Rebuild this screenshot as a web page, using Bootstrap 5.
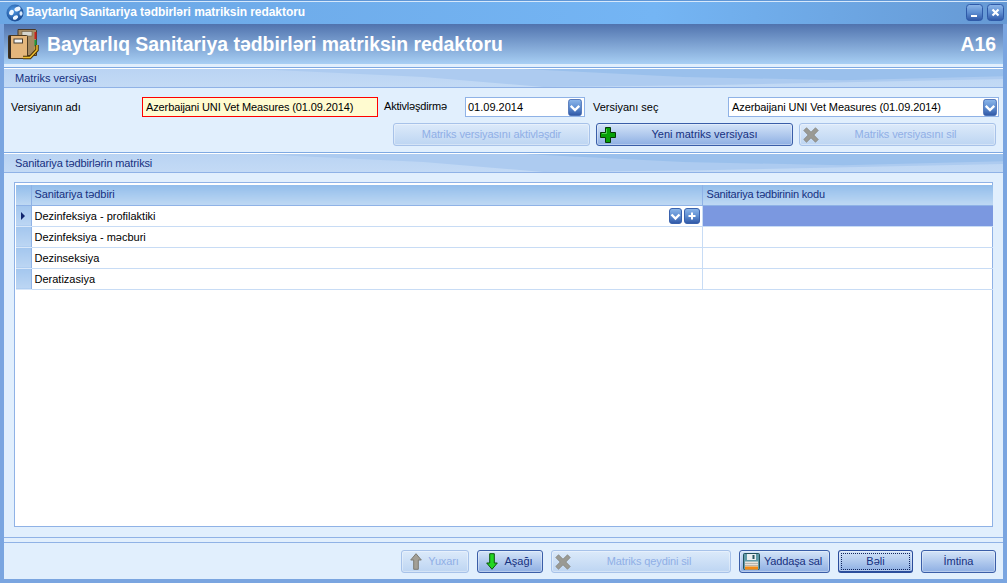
<!DOCTYPE html>
<html lang="az">
<head>
  <meta charset="UTF-8" />
  <meta name="viewport" content="width=device-width, initial-scale=1.0"/>
  <title>Baytarlıq Sanitariya tədbirləri matriksin redaktoru</title>
  <link href="https://cdn.jsdelivr.net/npm/bootstrap@5.3.0/dist/css/bootstrap.min.css" rel="stylesheet">
  <style>
    html, body {
      height: 100%;
      margin: 0;
      overflow: hidden;
    }

    body {
      background-color: #e1effd;
      font-family: "Liberation Sans", Arial, sans-serif;
      font-size: 11px;
      color: #000;
      line-height: 13px;
    }

    .app-window {
      width: 1007px;
      height: 583px;
    }

    .title-strip {
      height: 24px;
      flex: none;
      padding: 0 3px 0 6px;
      border-top: 1px solid #5f96d6;
      box-shadow: inset 0 1px 0 #d6e8fb;
      background: linear-gradient(90deg, #6ba6e4, #74b5f4 65%, #6699d4);
      color: #fff;
      font-size: 12px;
      font-weight: 700;
      letter-spacing: -.06px;
    }

    .title-text {
      flex: 1;
      margin-left: 2px;
    }

    .win-btn {
      width: 17px;
      height: 17px;
      display: block;
    }

    .win-body {
      flex: 1;
      min-height: 0;
      border-left: 4px solid #7aa5e0;
      border-right: 4px solid #7aa5e0;
      border-bottom: 4px solid #7aa5e0;
    }

    .head-strip {
      height: 40px;
      flex: none;
      padding: 0 7px 0 4px;
      background: linear-gradient(180deg, #5073ae, #a8cff4);
      color: #fff;
      font-size: 19.4px;
      font-weight: 700;
    }

    .head-gap {
      height: 3px;
      flex: none;
      background: #e1effd;
    }

    .sect-bar {
      position: relative;
      height: 21px;
      flex: none;
      border-top: 1px solid #7ea9e2;
      border-bottom: 1px solid #8fb2e6;
      padding: 4px 0 0 11px;
      color: #16307f;
      background: linear-gradient(180deg, #b9d3f3, #c3daf5);
    }

    .sect-bar::before,
    .sect-bar::after {
      content: "";
      position: absolute;
      left: 0;
      right: 0;
      top: 1px;
      bottom: 0;
    }

    .sect-bar::before {
      background: #adcbf0;
      clip-path: polygon(25% 0, 42% 45%, 54% 100%, 70% 90%, 100% 55%, 100% 0);
    }

    .sect-bar::after {
      background: #9ac0ec;
      clip-path: polygon(52% 0, 68% 45%, 84% 62%, 100% 40%, 100% 0);
    }

    .sect-white {
      position: absolute;
      left: 0;
      right: 0;
      top: 0;
      height: 1px;
      background: #fff;
      z-index: 1;
    }

    .sect-label {
      position: relative;
      z-index: 1;
    }

    .sect-label-tight {
      letter-spacing: -.13px;
    }

    .form-area {
      height: 64px;
      flex: none;
      padding: 9px 4px 0 7px;
    }

    .field-row {
      height: 20px;
      margin-bottom: 6px;
    }

    .lbl-name { width: 131px; }
    .lbl-act { width: 81px; margin-left: 6px; margin-top: -2px; letter-spacing: -.2px; }
    .lbl-pick { width: 135px; margin-left: 8px; }

    .form-control.name-input {
      width: 236px;
      height: 20px;
      min-height: 0;
      padding: 0 3px;
      border: 1px solid #f00;
      border-radius: 0;
      background: #fffbd0;
      font-size: 11px;
      line-height: 18px;
      color: #000;
      letter-spacing: -.12px;
    }

    .combo-box {
      height: 20px;
      padding: 0 1px 0 2px;
      border: 1px solid #8fb2e6;
      background: #fff;
    }

    .combo-date { width: 120px; padding-right: 2px; }
    .combo-version { width: 271px; padding-left: 3px; letter-spacing: -.08px; }

    .top-actions {
      gap: 6px;
      padding-right: 3px;
    }

    .btn.win-action {
      height: 23px;
      padding: 0 3px;
      border: 1px solid #3a5ea8;
      border-radius: 3px;
      background: linear-gradient(180deg, #d4e4f8, #8eafe3);
      color: #16307f;
      font-size: 11px;
      line-height: 13px;
      display: flex;
      align-items: center;
      box-shadow: inset 0 0 0 1px rgba(255,255,255,.35);
    }

    .btn.win-action:disabled {
      opacity: 1;
      border-color: #a7c2e9;
      background: linear-gradient(180deg, #dceafa, #bdd5f2);
      color: #90afe6;
      letter-spacing: -.12px;
    }

    .btn.win-action.is-default {
      border-color: #2a4d9c;
      border-width: 1px 1px 2px 1px;
      outline: 1px dotted #10245c;
      outline-offset: -4px;
    }

    .act-top { width: 197px; }
    .act-top-new .act-text { padding-left: 4px; }
    .act-up { width: 68px; }
    .act-down { width: 66px; }
    .act-del { width: 180px; }
    .act-save { width: 91px; letter-spacing: -.15px; padding-right: 3px !important; }
    .act-ok, .act-cancel { width: 75px; justify-content: center; }

    .act-text {
      flex: 1;
      text-align: center;
    }

    .grid-wrap {
      flex: 1;
      min-height: 0;
      padding: 9px 10px 10px 10px;
    }

    .grid-frame {
      height: 100%;
      padding: 2px 0 0 1px;
      border: 1px solid #8fb2e6;
      background: #fff;
    }

    .table.grid-table {
      table-layout: fixed;
      width: 977px;
      --bs-table-bg: transparent;
      font-size: 11px;
      color: #000;
    }

    .col-mark { width: 15px; }
    .col-name { width: 671px; }

    .grid-table th,
    .grid-table td {
      height: 21px;
      padding: 1px 3px 0;
      vertical-align: middle;
      border: 0;
      border-bottom: 1px solid #c8dcf5;
      border-right: 1px solid #c8dcf5;
      font-weight: 400;
    }

    .grid-table td:last-child,
    .grid-table th:last-child {
      border-right: 0;
    }

    .grid-table th {
      height: 20px;
      padding-top: 0;
      color: #16307f;
      border-bottom-color: #8fb2e6;
      border-right-color: #8fb2e6;
      background: linear-gradient(180deg, #92bdeb, #bed8f3);
      letter-spacing: -.1px;
    }

    .grid-table th:last-child {
      padding-left: 4px;
      letter-spacing: -.2px;
    }

    .grid-table .row-mark {
      padding: 0;
      border-right: 1px solid #8fb2e6;
      border-bottom: 1px solid #d8e7f9;
      background: linear-gradient(180deg, #a3c6ee, #bcd6f3);
    }

    .grid-table .cell-selected {
      background: #7b98e0;
    }

    .cell-btn {
      display: block;
      flex: none;
    }

    .cell-tools {
      display: flex;
      gap: 2px;
      margin-right: -1px;
    }

    .foot-area {
      height: 42px;
      flex: none;
      border-top: 1px solid #8fb2e6;
      padding-top: 4px;
    }

    .foot-row {
      border-top: 1px solid #8fb2e6;
      padding: 7px 7px 0 0;
    }
  </style>
</head>
<body>

<svg width="0" height="0" class="position-absolute">
  <defs>
    <linearGradient id="blueBtn" x1="0" y1="0" x2="0" y2="1">
      <stop offset="0" stop-color="#8db7ea"/>
      <stop offset=".5" stop-color="#5f8fd2"/>
      <stop offset="1" stop-color="#2f57a6"/>
    </linearGradient>
    <radialGradient id="globeFill" cx=".4" cy=".35" r=".75">
      <stop offset="0" stop-color="#4f9ae6"/>
      <stop offset="1" stop-color="#123f86"/>
    </radialGradient>
    <symbol id="ico-chevron" viewBox="0 0 16 20">
      <rect x=".5" y=".5" width="15" height="19" rx="2.500" fill="url(#blueBtn)" stroke="#3a62ad"/>
      <path d="M3 8l5 5 5-5" fill="none" stroke="#fff" stroke-width="2.800"/>
    </symbol>
    <symbol id="ico-plus" viewBox="0 0 16 16">
      <path d="M5.500.5h5v5h5v5h-5v5h-5v-5h-5v-5h5z" fill="#07a007" stroke="#063b06"/>
      <path d="M6.500 2v4.500h-4.500" fill="none" stroke="#4fd24f"/>
    </symbol>
    <symbol id="ico-cross" viewBox="0 0 16 16">
      <path d="M3.500.8L8 5.200 12.500.8 15.200 3.500 10.800 8l4.400 4.500-2.700 2.700L8 10.800l-4.500 4.400L.8 12.500 5.200 8 .8 3.500z" fill="#9a9a94" stroke="#85857f" stroke-width=".8"/>
    </symbol>
    <symbol id="ico-up" viewBox="0 0 12 17">
      <path d="M6 .7L11.300 7H8.300v9.300H3.700V7H.7z" fill="#a39f95" stroke="#7c7a72"/>
    </symbol>
    <symbol id="ico-down" viewBox="0 0 12 17">
      <path d="M3.700.7h4.600V10h3L6 16.300.7 10h3z" fill="#22d622" stroke="#0b560b"/>
    </symbol>
    <symbol id="ico-floppy" viewBox="0 0 17 17">
      <rect x=".5" y=".5" width="16" height="16" rx="1" fill="#5f9aa8" stroke="#23505a"/>
      <rect x="4" y="1" width="9" height="6" fill="#e9eef0"/>
      <rect x="9.500" y="2" width="2" height="4" fill="#2b5560"/>
      <rect x="2" y="8.500" width="13" height="8" fill="#e6e2da"/>
      <path d="M2 10.500h13M2 12.500h13" stroke="#b9b5ac"/>
      <rect x="2" y="13.500" width="13" height="3" fill="#f08a14"/>
    </symbol>
  </defs>
</svg>

<div class="app-window d-flex flex-column">

  <div class="title-strip d-flex align-items-center">
    <svg width="18" height="18" viewBox="0 0 18 18" class="flex-shrink-0">
      <circle cx="9" cy="9" r="8.500" fill="url(#globeFill)"/>
      <ellipse cx="11.500" cy="5" rx="3.200" ry="2.200" fill="#eef6ff" transform="rotate(-25 11.500 5)"/>
      <ellipse cx="5.500" cy="8.500" rx="2.200" ry="2.800" fill="#eef6ff" transform="rotate(25 5.500 8.500)"/>
      <ellipse cx="15" cy="9.500" rx="1.500" ry="2.200" fill="#d8e9fb"/>
      <ellipse cx="9.500" cy="13.500" rx="2.800" ry="1.900" fill="#eef6ff" transform="rotate(-30 9.500 13.500)"/>
    </svg>
    <span class="title-text">Baytarlıq Sanitariya tədbirləri matriksin redaktoru</span>
    <svg class="win-btn me-1" viewBox="0 0 17 17">
      <rect x=".5" y=".5" width="16" height="16" rx="3" fill="url(#blueBtn)" stroke="#2f5aa8"/>
      <rect x="5" y="11" width="6" height="2" fill="#fff"/>
    </svg>
    <svg class="win-btn" viewBox="0 0 17 17">
      <rect x=".5" y=".5" width="16" height="16" rx="3" fill="url(#blueBtn)" stroke="#2f5aa8"/>
      <path d="M5.500 5.500l6 6M11.500 5.500l-6 6" stroke="#fff" stroke-width="2.200"/>
    </svg>
  </div>

  <div class="win-body d-flex flex-column">

    <div class="head-strip d-flex align-items-center">
      <svg width="31" height="31" viewBox="0 0 31 31" class="flex-shrink-0 me-2">
        <path d="M10 .5h17.500l1 1v25H10z" fill="#a58a62" stroke="#4a3a28"/>
        <rect x="14" y="2.500" width="10" height="4.500" fill="#d6d6cf" stroke="#6a5a44" stroke-width=".6"/>
        <path d="M27.500 3v7" stroke="#c62020" stroke-width="2"/>
        <path d="M27.500 11v6" stroke="#1d9a3a" stroke-width="2"/>
        <path d="M27.500 18v4" stroke="#e0b020" stroke-width="2"/>
        <rect x=".5" y="6.500" width="19" height="23" rx="1" fill="#e4b67c" stroke="#4c3a22"/>
        <rect x=".5" y="6.500" width="2.500" height="23" fill="#33291f"/>
        <rect x="6" y="10" width="8.500" height="4" fill="#f4f4f4" stroke="#4a4034"/>
        <path d="M15 28.500h7l7-7.500v-5" fill="none" stroke="#4a3208" stroke-width="3.500"/>
        <path d="M15 28.500h7l7-7.500v-5" fill="none" stroke="#f0c030" stroke-width="1.500"/>
      </svg>
      <span class="flex-grow-1">Baytarlıq Sanitariya tədbirləri matriksin redaktoru</span>
      <span>A16</span>
    </div>
    <div class="head-gap"></div>

    <div class="sect-bar"><i class="sect-white"></i><span class="sect-label">Matriks versiyası</span></div>

    <div class="form-area">
      <div class="field-row d-flex align-items-center">
        <span class="lbl-name">Versiyanın adı</span>
        <input class="form-control name-input" type="text" value="Azerbaijani UNI Vet Measures (01.09.2014)">
        <span class="lbl-act">Aktivləşdirmə</span>
        <div class="combo-box combo-date d-flex align-items-center justify-content-between">
          <span>01.09.2014</span>
          <svg width="14" height="17" class="cell-btn"><use href="#ico-chevron"/></svg>
        </div>
        <span class="lbl-pick">Versiyanı seç</span>
        <div class="combo-box combo-version d-flex align-items-center justify-content-between">
          <span>Azerbaijani UNI Vet Measures (01.09.2014)</span>
          <svg width="14" height="17" class="cell-btn"><use href="#ico-chevron"/></svg>
        </div>
      </div>
      <div class="d-flex justify-content-end top-actions">
        <button class="btn win-action act-top" disabled><span class="act-text">Matriks versiyasını aktivləşdir</span></button>
        <button class="btn win-action act-top act-top-new"><svg width="16" height="16"><use href="#ico-plus"/></svg><span class="act-text">Yeni matriks versiyası</span></button>
        <button class="btn win-action act-top" disabled><svg width="16" height="16"><use href="#ico-cross"/></svg><span class="act-text">Matriks versiyasını sil</span></button>
      </div>
    </div>

    <div class="sect-bar"><i class="sect-white"></i><span class="sect-label sect-label-tight">Sanitariya tədbirlərin matriksi</span></div>

    <div class="grid-wrap">
      <div class="grid-frame">
        <table class="table grid-table mb-0">
          <colgroup>
            <col class="col-mark">
            <col class="col-name">
            <col>
          </colgroup>
          <thead>
            <tr><th class="p-0"></th><th>Sanitariya tədbiri</th><th>Sanitariya tədbirinin kodu</th></tr>
          </thead>
          <tbody>
            <tr>
              <td class="row-mark">
                <svg width="14" height="20" viewBox="0 0 14 20" class="d-block"><path d="M5 6l4 4-4 4z" fill="#10246e"/></svg>
              </td>
              <td>
                <div class="d-flex align-items-center justify-content-between">
                  <span>Dezinfeksiya - profilaktiki</span>
                  <span class="cell-tools">
                    <svg width="13" height="16" class="cell-btn" viewBox="0 0 13 16"><rect x=".5" y=".5" width="12" height="15" rx="2.500" fill="url(#blueBtn)" stroke="#3a62ad"/><path d="M2.500 6.500l4 4 4-4" fill="none" stroke="#fff" stroke-width="2.400"/></svg>
                    <svg width="16" height="16" class="cell-btn" viewBox="0 0 16 16"><rect x=".5" y=".5" width="15" height="15" rx="2.500" fill="url(#blueBtn)" stroke="#3a62ad"/><path d="M8 4.500v7M4.500 8h7" stroke="#fff" stroke-width="2"/></svg>
                  </span>
                </div>
              </td>
              <td class="cell-selected"></td>
            </tr>
            <tr><td class="row-mark"></td><td>Dezinfeksiya - məcburi</td><td></td></tr>
            <tr><td class="row-mark"></td><td>Dezinseksiya</td><td></td></tr>
            <tr><td class="row-mark"></td><td>Deratizasiya</td><td></td></tr>
          </tbody>
        </table>
      </div>
    </div>

    <div class="foot-area">
      <div class="foot-row d-flex justify-content-end gap-2">
        <button class="btn win-action act-up ps-2" disabled><svg width="12" height="17"><use href="#ico-up"/></svg><span class="act-text">Yuxarı</span></button>
        <button class="btn win-action act-down ps-2"><svg width="12" height="17"><use href="#ico-down"/></svg><span class="act-text">Aşağı</span></button>
        <button class="btn win-action act-del" disabled><svg width="16" height="16"><use href="#ico-cross"/></svg><span class="act-text">Matriks qeydini sil</span></button>
        <button class="btn win-action act-save"><svg width="17" height="17"><use href="#ico-floppy"/></svg><span class="act-text">Yaddaşa sal</span></button>
        <button class="btn win-action act-ok is-default">Bəli</button>
        <button class="btn win-action act-cancel">İmtina</button>
      </div>
    </div>

  </div>
</div>

<script src="https://cdn.jsdelivr.net/npm/bootstrap@5.3.0/dist/js/bootstrap.bundle.min.js"></script>
</body>
</html>
